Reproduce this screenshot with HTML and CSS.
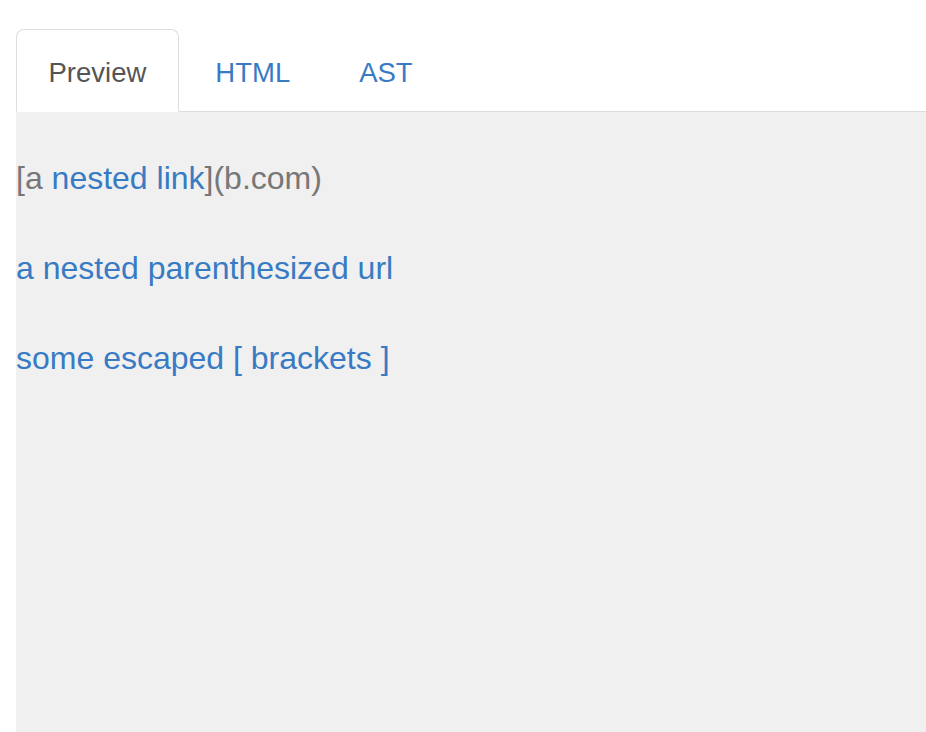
FILE: index.html
```html
<!DOCTYPE html>
<html>
<head>
<meta charset="utf-8">
<link rel="stylesheet" href="styles.css">
</head>
<body>
<div class="page">
  <ul class="tabs">
    <li class="tab active"><a>Preview</a></li>
    <li class="tab"><a href="#">HTML</a></li>
    <li class="tab"><a href="#">AST</a></li>
  </ul>
  <div class="panel">
    <p class="muted">[a <a href="#">nested link</a>](b.com)</p>
    <p><a href="#">a nested parenthesized url</a></p>
    <p><a href="#">some escaped [ brackets ]</a></p>
  </div>
</div>
</body>
</html>
```
FILE: styles.css
```css
html, body {
  margin: 0;
  padding: 0;
  background: #fff;
}
body {
  font-family: "Liberation Sans", Arial, Helvetica, sans-serif;
  font-size: 27.5px;
  color: #333;
}
.page {
  padding: 29px 0 0 16px;
  display: flex;
  flex-direction: column;
  height: 732px;
  box-sizing: border-box;
}
.tabs {
  list-style: none;
  margin: 0;
  padding: 0;
  display: flex;
  border-bottom: 1px solid #ddd;
}
.tab {
  margin-right: 4px;
  margin-bottom: -1px;
}
.tab a {
  display: block;
  padding: 24px 31.5px 20px;
  line-height: 37px;
  border: 1px solid transparent;
  border-radius: 8px 8px 0 0;
  color: #387bc4;
  text-decoration: none;
}
.tab.active a {
  color: #555;
  background: #fff;
  border-color: #ddd;
  border-bottom-color: #fff;
}
.panel {
  flex: 1;
  background: #f0f0f0;
  padding-top: 48px;
  font-size: 32px;
}
.panel p {
  margin: 0 0 53px;
  line-height: 37px;
}
.panel a {
  color: #387bc4;
  text-decoration: none;
}
.muted {
  color: #777;
}
```
